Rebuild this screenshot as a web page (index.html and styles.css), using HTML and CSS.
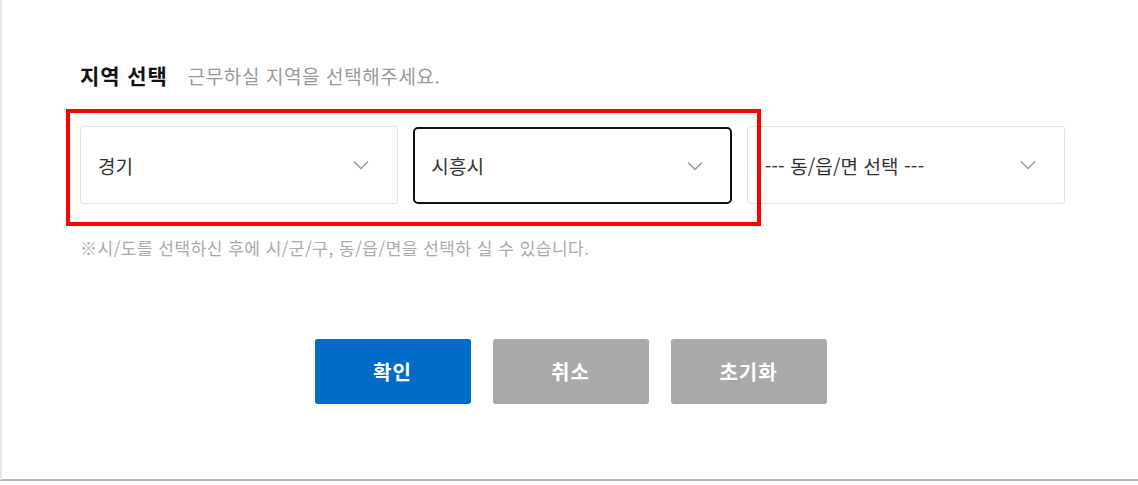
FILE: index.html
```html
<!DOCTYPE html>
<html lang="ko">
<head>
    <meta charset="UTF-8">
    <meta name="viewport" content="width=device-width, initial-scale=1.0">
    <title>지역 선택</title>
    <link rel="stylesheet" href="styles.css">
</head>
<body>

<!-- Region modal -->
<div class="modal">
    <div class="title-row">
        <h2 class="title">지역 선택</h2>
        <span class="subtitle">근무하실 지역을 선택해주세요.</span>
    </div>

    <div class="select-row">
        <div class="select">
            <span>경기</span>
            <svg class="chevron" width="16" height="10" viewBox="0 0 16 10"><path d="M1 1.5 L8 8.5 L15 1.5" fill="none" stroke="#999" stroke-width="1.4"/></svg>
        </div>
        <div class="select active">
            <span>시흥시</span>
            <svg class="chevron" width="16" height="10" viewBox="0 0 16 10"><path d="M1 1.5 L8 8.5 L15 1.5" fill="none" stroke="#999" stroke-width="1.4"/></svg>
        </div>
        <div class="select">
            <span>--- 동/읍/면 선택 ---</span>
            <svg class="chevron" width="16" height="10" viewBox="0 0 16 10"><path d="M1 1.5 L8 8.5 L15 1.5" fill="none" stroke="#999" stroke-width="1.4"/></svg>
        </div>
        <div class="highlight"></div>
    </div>

    <p class="note">※시/도를 선택하신 후에 시/군/구, 동/읍/면을 선택하 실 수 있습니다.</p>

    <div class="buttons">
        <button class="btn btn-primary">확인</button>
        <button class="btn btn-gray">취소</button>
        <button class="btn btn-gray">초기화</button>
    </div>
</div>

</body>
</html>
```

FILE: styles.css
```css
body {
    margin: 0;
    font-family: "Noto Sans CJK KR", "Noto Sans", sans-serif;
    background: #fff;
    color: #333;
}

.modal {
    height: 481px;
    border-left: 2px solid #e6e6e6;
    border-bottom: 2px solid #b5b5b5;
    padding: 0 73px 0 78px;
    box-sizing: border-box;
}

/* Title */
.title-row {
    display: flex;
    align-items: baseline;
    padding-top: 60px;
    height: 30px;
    line-height: 30px;
}

.title {
    margin: 0;
    font-size: 21px;
    font-weight: 700;
    color: #111;
    letter-spacing: 0.9px;
}

.subtitle {
    margin-left: 20px;
    font-size: 19px;
    color: #999;
    letter-spacing: 0.6px;
}

/* Selects */
.select-row {
    position: relative;
    display: grid;
    grid-template-columns: repeat(3, 1fr);
    gap: 15px;
    margin-top: 36px;
}

.select {
    height: 78px;
    border: 1px solid #e3e3e3;
    border-radius: 3px;
    box-sizing: border-box;
    display: flex;
    align-items: center;
    justify-content: space-between;
    padding: 0 28px 0 17px;
    font-size: 19px;
    color: #333;
    letter-spacing: 0.1px;
}

.select.active {
    border: 2px solid #111;
    border-radius: 5px;
    height: 77px;
    margin-top: 1px;
    padding-left: 16px;
    padding-right: 27px;
}

.chevron { display: block; }

.highlight {
    position: absolute;
    left: -14px;
    top: -17px;
    width: 695px;
    height: 117px;
    border: 4px solid #ff0000;
    box-sizing: border-box;
    pointer-events: none;
}

.note {
    margin: 31px 0 0;
    font-size: 17px;
    line-height: 25px;
    color: #aaa;
    letter-spacing: 0.5px;
}

/* Buttons */
.buttons {
    display: flex;
    justify-content: center;
    gap: 22px;
    margin-top: 79px;
    padding-right: 4px;
}

.btn {
    width: 156px;
    height: 65px;
    border: none;
    border-radius: 3px;
    color: #fff;
    font-family: inherit;
    font-size: 20px;
    font-weight: 700;
    letter-spacing: 1px;
}

.btn-primary { background-color: #006cc8; }
.btn-gray { background-color: #a9a9a9; }
```
